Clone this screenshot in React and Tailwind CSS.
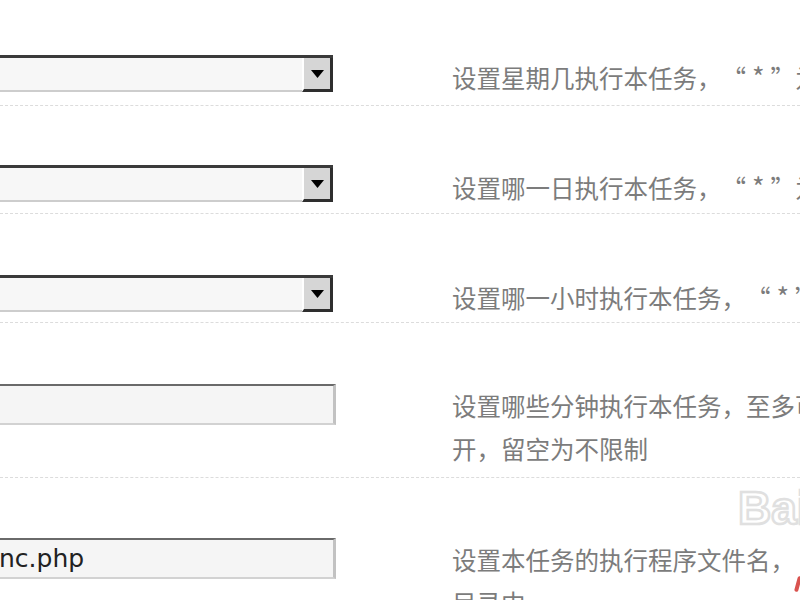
import React from "react";

const Select = () => (
  <div className="flex h-[37px] w-[333px] border-t-[3px] border-[#3a3a3a] bg-[#f7f7f7]">
    <div className="flex-1 border-b-2 border-[#cdcdcd]" />
    <div className="flex w-[31px] items-center justify-center border-b-[3px] border-l-2 border-r-[3px] border-b-[#2e2e2e] border-l-white border-r-[#2e2e2e] bg-[#d6d6d6]">
      <svg width="13" height="8" viewBox="0 0 13 8">
        <path d="M0 0H13L6.5 8Z" fill="#000" />
      </svg>
    </div>
  </div>
);

const Input = ({ value }) => (
  <div className="flex h-[41px] w-[336px] items-center overflow-hidden border-t-2 border-r-[3px] border-b-2 border-t-[#6a6a6a] border-r-[#c2c2c2] border-b-[#d2d2d2] bg-[#f5f5f5]">
    {value ? (
      <span className="ml-[-1px] font-['DejaVu_Sans',sans-serif] text-[25px] leading-none text-[#222]">
        {value}
      </span>
    ) : null}
  </div>
);

const Q = () => (
  <>
    <span className="inline-block w-[24.5px] text-right">“</span>
    <span className="inline-block w-[24.5px] text-center text-[27px]">*</span>
    <span className="inline-block w-[24.5px] text-left">”</span>
  </>
);

const Row = ({ h, pt, control, children, last }) => (
  <div
    className={
      "box-border flex w-[800px] " +
      (last ? "" : "border-b border-dashed border-[#dcdcdc]")
    }
    style={{ height: h, paddingTop: pt }}
  >
    <div className="w-[452px] shrink-0">{control}</div>
    <div className="whitespace-nowrap font-['Noto_Sans_CJK_SC',sans-serif] text-[24.5px] leading-[43px] text-[#7c7c7c]">
      {children}
    </div>
  </div>
);

export default function App() {
  return (
    <div className="relative h-[600px] w-[800px] overflow-hidden bg-white" lang="zh-CN">
      <Row h={106} pt={55} control={<Select />}>
        设置星期几执行本任务，<Q />为不限制
      </Row>
      <Row h={108} pt={59} control={<Select />}>
        设置哪一日执行本任务，<Q />为不限制
      </Row>
      <Row h={109} pt={61} control={<Select />}>
        设置哪一小时执行本任务，<Q />为不限制
      </Row>
      <Row h={155} pt={61} control={<Input />}>
        设置哪些分钟执行本任务，至多可以设置 12 个分钟值
        <br />
        开，留空为不限制
      </Row>
      <Row h={130} pt={60} control={<Input value="nc.php" />} last>
        设置本任务的执行程序文件名，
        <br />
        目录中
      </Row>

      <div className="pointer-events-none absolute left-[738px] top-[485px] font-['Liberation_Sans',sans-serif] text-[46px] font-bold leading-none text-white [-webkit-text-stroke:2.5px_#e0e0e0]">
        Bai
      </div>
      <div className="absolute left-[796px] top-[576px] h-[16px] w-[4px] rotate-[15deg] rounded-sm bg-[#d9534f]" />
    </div>
  );
}
